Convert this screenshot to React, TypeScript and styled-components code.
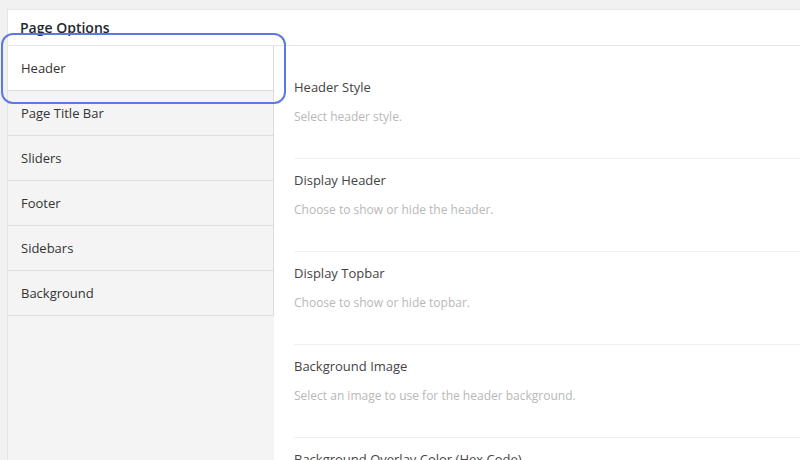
import React from "react";
import styled, { createGlobalStyle } from "styled-components";

const Global = createGlobalStyle`
  html, body { margin: 0; padding: 0; background: #f1f1f1; overflow: hidden; }
  body { font-family: "Open Sans", "Liberation Sans", sans-serif; }
  * { box-sizing: border-box; }
`;

const Page = styled.div`
  position: relative;
  width: 800px;
  height: 460px;
  padding: 9px 0 0 7px;
  overflow: hidden;
`;

const Panel = styled.div`
  width: 840px;
  min-height: 480px;
  background: #fff;
  border: 1px solid #e5e5e5;
  display: flex;
  flex-direction: column;
`;

const PanelHeader = styled.div`
  flex: none;
  height: 36px;
  padding: 8px 12px 0;
  border-bottom: 1px solid #e8e8e8;
  font-size: 14px;
  font-weight: 600;
  line-height: 20px;
  color: #23282d;
`;

const Body = styled.div`
  flex: 1;
  display: flex;
`;

const Sidebar = styled.div`
  width: 266px;
  flex: none;
  background: #f4f4f4;
`;

const TabList = styled.ul`
  list-style: none;
  margin: 0;
  padding: 0;
  border-right: 1px solid #dcdcdc;
`;

const Tab = styled.li<{ $active?: boolean }>`
  height: 45px;
  padding-left: 13px;
  line-height: 44px;
  font-size: 13px;
  color: #333;
  background: ${(p) => (p.$active ? "#fff" : "#f4f4f4")};
  border-bottom: 1px solid #dedede;
`;

const Content = styled.div`
  flex: 1;
  padding: 20px 0 0 20px;
`;

const Field = styled.div`
  padding: 11px 0 32px;
  border-bottom: 1px solid #f0f0f0;
`;

const FieldTitle = styled.div`
  font-size: 13px;
  line-height: 20px;
  color: #444;
  margin-bottom: 11px;
`;

const FieldDesc = styled.div`
  font-size: 12px;
  line-height: 18px;
  color: #b8b8b8;
`;

const Highlight = styled.div`
  position: absolute;
  left: 1px;
  top: 33px;
  width: 285px;
  height: 71px;
  border: 2px solid #5a79e4;
  border-radius: 12px;
  pointer-events: none;
`;

const tabs = ["Header", "Page Title Bar", "Sliders", "Footer", "Sidebars", "Background"];

const fields = [
  { title: "Header Style", desc: "Select header style." },
  { title: "Display Header", desc: "Choose to show or hide the header." },
  { title: "Display Topbar", desc: "Choose to show or hide topbar." },
  { title: "Background Image", desc: "Select an image to use for the header background." },
  { title: "Background Overlay Color (Hex Code)", desc: "Select a color for the header background overlay." },
];

export default function App() {
  return (
    <>
      <Global />
      <Page>
        <Panel>
          <PanelHeader>Page Options</PanelHeader>
          <Body>
            <Sidebar>
              <TabList>
                {tabs.map((t, i) => (
                  <Tab key={t} $active={i === 0}>
                    {t}
                  </Tab>
                ))}
              </TabList>
            </Sidebar>
            <Content>
              {fields.map((f) => (
                <Field key={f.title}>
                  <FieldTitle>{f.title}</FieldTitle>
                  <FieldDesc>{f.desc}</FieldDesc>
                </Field>
              ))}
            </Content>
          </Body>
        </Panel>
        <Highlight />
      </Page>
    </>
  );
}
